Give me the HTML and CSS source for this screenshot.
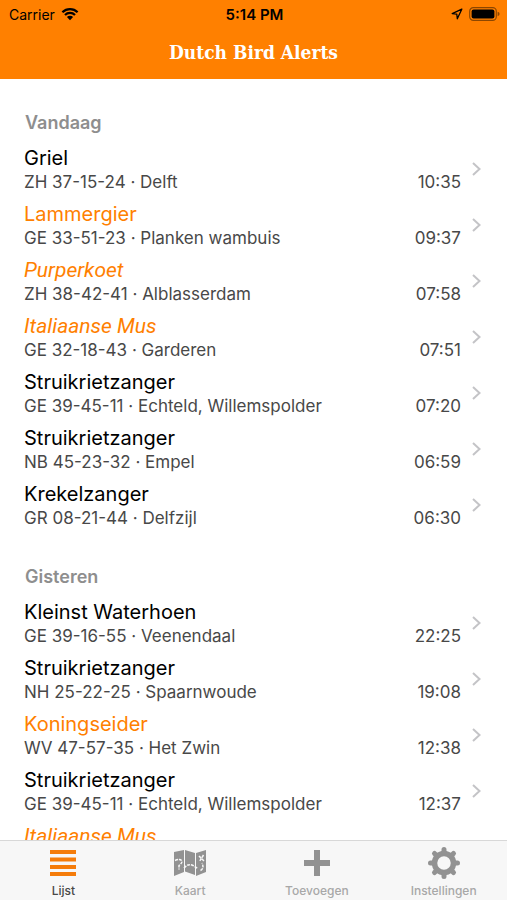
FILE: index.html
```
<!DOCTYPE html>
<html lang="nl">
<head>
    <meta charset="UTF-8">
    <meta name="viewport" content="width=device-width, initial-scale=1.0">
    <title>Dutch Bird Alerts</title>
    <link rel="stylesheet" href="styles.css">
</head>
<body>

    <header class="header">
        <div class="status-bar">
            <div class="status-left">
                <span>Carrier</span>
                <svg class="wifi" viewBox="0 0 18 14" aria-hidden="true">
                    <path d="M1.4 5.2a10.8 10.8 0 0 1 15.2 0M4 8a7.1 7.1 0 0 1 10 0" fill="none" stroke="currentColor" stroke-width="2.3"/>
                    <path d="M5.9 10.1a4.4 4.4 0 0 1 6.2 0L9 13.3z" fill="currentColor"/>
                </svg>
            </div>
            <div class="status-time">5:14 PM</div>
            <div class="status-right">
                <svg class="location" viewBox="0 0 12 12" aria-hidden="true">
                    <path d="M10.8 1.2L1.2 5.6l4.6.6.5 4.6z" fill="none" stroke="currentColor" stroke-width="1.3" stroke-linejoin="round"/>
                </svg>
                <svg class="battery" viewBox="0 0 31 14" aria-hidden="true">
                    <rect x=".7" y=".7" width="26.6" height="12.6" rx="3.6" fill="none" stroke="currentColor" stroke-width="1.2" opacity=".45"/>
                    <rect x="2.6" y="2.5" width="22.8" height="9" rx="2" fill="currentColor"/>
                    <path d="M28.6 4.8q2 .6 2 2.2t-2 2.2z" fill="currentColor" opacity=".45"/>
                </svg>
            </div>
        </div>
        <h1 class="title">Dutch Bird Alerts</h1>
    </header>

    <main class="list">
        <section>
            <h2 class="day">Vandaag</h2>
            <a class="sighting" href="#">
                <div class="info">
                    <div class="name">Griel</div>
                    <div class="details"><span>ZH 37-15-24 · Delft</span><time>10:35</time></div>
                </div>
                <svg class="chevron" viewBox="0 0 10 16"><path d="M1 2l6.500 6L1 14"/></svg>
            </a>
            <a class="sighting rare" href="#">
                <div class="info">
                    <div class="name">Lammergier</div>
                    <div class="details"><span>GE 33-51-23 · Planken wambuis</span><time>09:37</time></div>
                </div>
                <svg class="chevron" viewBox="0 0 10 16"><path d="M1 2l6.500 6L1 14"/></svg>
            </a>
            <a class="sighting rare escape" href="#">
                <div class="info">
                    <div class="name">Purperkoet</div>
                    <div class="details"><span>ZH 38-42-41 · Alblasserdam</span><time>07:58</time></div>
                </div>
                <svg class="chevron" viewBox="0 0 10 16"><path d="M1 2l6.500 6L1 14"/></svg>
            </a>
            <a class="sighting rare escape" href="#">
                <div class="info">
                    <div class="name">Italiaanse Mus</div>
                    <div class="details"><span>GE 32-18-43 · Garderen</span><time>07:51</time></div>
                </div>
                <svg class="chevron" viewBox="0 0 10 16"><path d="M1 2l6.500 6L1 14"/></svg>
            </a>
            <a class="sighting" href="#">
                <div class="info">
                    <div class="name">Struikrietzanger</div>
                    <div class="details"><span>GE 39-45-11 · Echteld, Willemspolder</span><time>07:20</time></div>
                </div>
                <svg class="chevron" viewBox="0 0 10 16"><path d="M1 2l6.500 6L1 14"/></svg>
            </a>
            <a class="sighting" href="#">
                <div class="info">
                    <div class="name">Struikrietzanger</div>
                    <div class="details"><span>NB 45-23-32 · Empel</span><time>06:59</time></div>
                </div>
                <svg class="chevron" viewBox="0 0 10 16"><path d="M1 2l6.500 6L1 14"/></svg>
            </a>
            <a class="sighting" href="#">
                <div class="info">
                    <div class="name">Krekelzanger</div>
                    <div class="details"><span>GR 08-21-44 · Delfzijl</span><time>06:30</time></div>
                </div>
                <svg class="chevron" viewBox="0 0 10 16"><path d="M1 2l6.500 6L1 14"/></svg>
            </a>
        </section>

        <section>
            <h2 class="day">Gisteren</h2>
            <a class="sighting" href="#">
                <div class="info">
                    <div class="name">Kleinst Waterhoen</div>
                    <div class="details"><span>GE 39-16-55 · Veenendaal</span><time>22:25</time></div>
                </div>
                <svg class="chevron" viewBox="0 0 10 16"><path d="M1 2l6.500 6L1 14"/></svg>
            </a>
            <a class="sighting" href="#">
                <div class="info">
                    <div class="name">Struikrietzanger</div>
                    <div class="details"><span>NH 25-22-25 · Spaarnwoude</span><time>19:08</time></div>
                </div>
                <svg class="chevron" viewBox="0 0 10 16"><path d="M1 2l6.500 6L1 14"/></svg>
            </a>
            <a class="sighting rare" href="#">
                <div class="info">
                    <div class="name">Koningseider</div>
                    <div class="details"><span>WV 47-57-35 · Het Zwin</span><time>12:38</time></div>
                </div>
                <svg class="chevron" viewBox="0 0 10 16"><path d="M1 2l6.500 6L1 14"/></svg>
            </a>
            <a class="sighting" href="#">
                <div class="info">
                    <div class="name">Struikrietzanger</div>
                    <div class="details"><span>GE 39-45-11 · Echteld, Willemspolder</span><time>12:37</time></div>
                </div>
                <svg class="chevron" viewBox="0 0 10 16"><path d="M1 2l6.500 6L1 14"/></svg>
            </a>
            <a class="sighting rare escape" href="#">
                <div class="info">
                    <div class="name">Italiaanse Mus</div>
                </div>
            </a>
        </section>
    </main>

    <nav class="tab-bar">
        <a class="tab active" href="#">
            <svg class="tab-icon" viewBox="0 0 32 32" aria-hidden="true">
                <path d="M3 3h26v4H3zM3 10.500h26v4H3zM3 18h26v4H3zM3 25h26v4H3z" fill="currentColor"/>
            </svg>
            <span>Lijst</span>
        </a>
        <a class="tab" href="#">
            <svg class="tab-icon" viewBox="0 0 32 32" aria-hidden="true">
                <path d="M0 5l10-2v22L0 29zM11 3l10 3v22l-10-3.500zM22 6l10-3v22l-10 4z" fill="currentColor"/>
                <path d="M1 13.500q5-2 6.500 0t-2.500 5v4M10 21q4-5 9-2.500l5 3M26.500 23.500q4-2 1.500-7.500M25 9l5 5M29.500 8l-4 6.500" fill="none" stroke="#f7f7f7" stroke-width="1.5" stroke-dasharray="3 1"/>
            </svg>
            <span>Kaart</span>
        </a>
        <a class="tab" href="#">
            <svg class="tab-icon" viewBox="0 0 32 32" aria-hidden="true">
                <path d="M13 3h6v10h10v6H19v10h-6V19H3v-6h10z" fill="currentColor"/>
            </svg>
            <span>Toevoegen</span>
        </a>
        <a class="tab" href="#">
            <svg class="tab-icon" viewBox="0 0 32 32" aria-hidden="true">
                <circle cx="16" cy="16" r="9.500" fill="none" stroke="currentColor" stroke-width="5.500"/>
                <g stroke="currentColor" stroke-width="5" stroke-linecap="round">
                    <path d="M16 2.500v3M16 26.500v3M2.500 16h3M26.500 16h3M6.500 6.500l2 2M23.500 23.500l2 2M25.500 6.500l-2 2M8.500 23.500l-2 2"/>
                </g>
            </svg>
            <span>Instellingen</span>
        </a>
    </nav>

</body>
</html>
```
FILE: styles.css
```
* {
    box-sizing: border-box;
}

body {
    margin: 0;
    height: 100vh;
    display: flex;
    flex-direction: column;
    background: #fff;
    color: #000;
    font-family: Inter, "Liberation Sans", sans-serif;
}

a {
    color: inherit;
    text-decoration: none;
}

/* header */
.header {
    background: #ff8000;
    padding-bottom: 11px;
}

.status-bar {
    display: flex;
    align-items: center;
    height: 28px;
    padding: 0 7px 0 9px;
    font-size: 14px;
}

.status-left,
.status-right {
    flex: 1;
    display: flex;
    align-items: center;
    gap: 6px;
}

.status-right {
    justify-content: flex-end;
}

.status-time {
    font-size: 15px;
    font-weight: 600;
}

.wifi {
    width: 18px;
    height: 14px;
}

.location {
    width: 12px;
    height: 12px;
}

.battery {
    width: 31px;
    height: 14px;
}

.title {
    margin: 0;
    padding-top: 8px;
    color: #fff;
    font-family: "DejaVu Serif Condensed", "DejaVu Serif", serif;
    font-size: 19px;
    font-weight: 700;
    line-height: 32px;
    text-align: center;
}

/* list of sightings */
.list {
    flex: 1;
    min-height: 0;
    overflow: hidden;
}

.day {
    margin: 0;
    padding: 32px 25px 6px;
    color: #8e8e8e;
    font-size: 18px;
    font-weight: 600;
    line-height: 24px;
}

.sighting {
    display: flex;
    align-items: center;
    gap: 11px;
    height: 56px;
    padding: 0 25px 0 24px;
}

.info {
    flex: 1;
    height: 48px;
}

.name {
    font-size: 20px;
    line-height: 26px;
}

.details {
    display: flex;
    justify-content: space-between;
    color: #484848;
    font-size: 17px;
    line-height: 22px;
}

.rare .name {
    color: #ff8000;
}

.escape .name {
    font-family: Roboto, "Liberation Sans", sans-serif;
    font-size: 21px;
    font-style: italic;
}

.chevron {
    width: 10px;
    height: 16px;
    fill: none;
    stroke: #c4c4c7;
    stroke-width: 2;
}

/* tab bar */
.tab-bar {
    display: flex;
    height: 60px;
    border-top: 1px solid #d8d8d8;
    background: #f7f7f7;
}

.tab {
    flex: 1;
    display: flex;
    flex-direction: column;
    align-items: center;
    padding-top: 6px;
    color: #929292;
    font-size: 12px;
    font-weight: 500;
    line-height: 16px;
}

.tab span {
    margin-top: 4px;
    color: #a8a8a8;
}

.tab-icon {
    width: 32px;
    height: 32px;
}

.active {
    color: #f57c0a;
}

.active span {
    color: #484848;
}
```
